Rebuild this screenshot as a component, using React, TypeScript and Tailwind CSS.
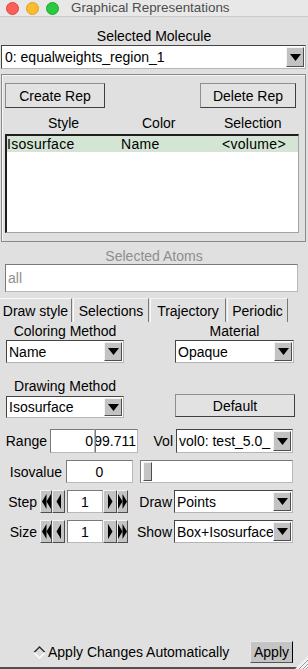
import React from 'react';

const raised =
  'border border-t-[#f4f4f4] border-l-[#f4f4f4] border-b-[#4e4e4e] border-r-[#4e4e4e]';

const DownArrow = () => (
  <svg width="11" height="7" viewBox="0 0 11 7">
    <path d="M0 0H11L5.5 7Z" fill="#000" />
  </svg>
);

const Dropdown: React.FC<{ text: string; className: string; pad?: string }> = ({ text, className, pad = 'pl-[2px]' }) => (
  <div
    className={`flex items-stretch bg-white border border-t-[#444] border-l-[#444] border-b-[#b5b5b5] border-r-[#b5b5b5] overflow-hidden ${className}`}
  >
    <div className={`flex-1 min-w-0 flex items-center overflow-hidden whitespace-nowrap leading-[16px] ${pad}`}>
      {text}
    </div>
    <div className={`w-[18px] shrink-0 my-[1px] mr-[1px] bg-[#c2c2c2] flex items-center justify-center ${raised}`}>
      <DownArrow />
    </div>
  </div>
);

const Entry: React.FC<{ className: string; children?: React.ReactNode }> = ({ className, children }) => (
  <div
    className={`bg-white border border-t-[#7a7a7a] border-l-[#7a7a7a] border-b-[#b9b9b9] border-r-[#b9b9b9] flex items-center overflow-hidden whitespace-nowrap leading-[16px] ${className}`}
  >
    {children}
  </div>
);

const Button: React.FC<{ label: string; className: string }> = ({ label, className }) => (
  <div
    className={`flex items-center justify-center bg-[#e2e2e2] border border-t-[#8e8e8e] border-l-[#8e8e8e] border-b-[#3f3f3f] border-r-[#3f3f3f] leading-[16px] ${className}`}
  >
    {label}
  </div>
);

const ArrowBtn: React.FC<{ dir: 'l' | 'r'; double?: boolean; className: string }> = ({ dir, double, className }) => (
  <div className={`h-full bg-[#c4c4c4] flex items-center justify-center ${raised} ${className}`}>
    <svg width={double ? 9 : 5} height="15" viewBox={double ? '0 0 9 15' : '0 0 5 15'}>
      {dir === 'l' ? (
        double ? (
          <>
            <path d="M4.5 0V15L0 7.5Z" fill="#000" />
            <path d="M9 0V15L4.5 7.5Z" fill="#000" />
          </>
        ) : (
          <path d="M5 0V15L0.5 7.5Z" fill="#000" />
        )
      ) : double ? (
        <>
          <path d="M0 0V15L4.5 7.5Z" fill="#000" />
          <path d="M4.5 0V15L9 7.5Z" fill="#000" />
        </>
      ) : (
        <path d="M0 0V15L4.5 7.5Z" fill="#000" />
      )}
    </svg>
  </div>
);

const Spinner: React.FC<{ label: string; side: string; choice: string }> = ({ label, side, choice }) => (
  <div className="mt-[7px] h-[23px] flex items-center">
    <div className="w-[37px] text-right leading-[16px]">{label}</div>
    <ArrowBtn dir="l" double className="ml-[3px] w-[12px]" />
    <ArrowBtn dir="l" className="w-[13px]" />
    <Entry className="ml-[2px] w-[36px] h-full justify-center">1</Entry>
    <ArrowBtn dir="r" className="w-[14px]" />
    <ArrowBtn dir="r" double className="w-[11px]" />
    <div className="w-[44px] text-right leading-[16px]">{side}</div>
    <Dropdown text={choice} className="ml-[2px] w-[119px] h-full" />
  </div>
);

export default function App() {
  return (
    <div className="relative w-[308px] h-[669px] bg-[#e0e0e0] flex flex-col overflow-hidden text-[14px] text-black font-['Liberation_Sans',Arial,sans-serif]">
      {/* title bar */}
      <div className="h-[17px] shrink-0 flex items-center bg-[#e8e8e8] border-b border-[#cacaca]">
        <div className="ml-[6px] flex gap-[7px]">
          <div className="w-[13px] h-[13px] rounded-full bg-[#fc5f57] border border-[#e0443e]" />
          <div className="w-[13px] h-[13px] rounded-full bg-[#fdbc2e] border border-[#dea123]" />
          <div className="w-[13px] h-[13px] rounded-full bg-[#29c940] border border-[#1aab29]" />
        </div>
        <div className="ml-[12px] text-[13.4px] leading-[16px] text-[#4d4d4d]">Graphical Representations</div>
      </div>

      <div className="mt-[11px] h-[16px] leading-[16px] text-center">Selected Molecule</div>
      <Dropdown text="0: equalweights_region_1" className="mt-[1px] ml-[1px] w-[305px] h-[24px]" pad="pl-[3px]" />

      {/* reps frame */}
      <div className="mt-[5px] ml-[1px] w-[305px] h-[168px] shrink-0 border border-[#8a8a8a] shadow-[inset_1px_1px_0_#f6f6f6] flex flex-col">
        <div className="mt-[8px] h-[25px] flex">
          <Button label="Create Rep" className="ml-[3px] w-[100px]" />
          <Button label="Delete Rep" className="ml-auto mr-[9px] w-[96px]" />
        </div>
        <div className="mt-[7px] h-[16px] leading-[16px] flex">
          <div className="w-[46px]" />
          <div className="w-[94px]">Style</div>
          <div className="w-[82px]">Color</div>
          <div>Selection</div>
        </div>
        <div className="mt-[3px] ml-[3px] w-[294px] h-[99px] bg-white border-t-2 border-l-2 border-t-[#1e1e1e] border-l-[#1e1e1e] border-r border-b border-r-[#a3a3a3] border-b-[#a3a3a3]">
          <div className="h-[16px] leading-[16px] bg-[#d5e5d5] flex tracking-[0.3px]">
            <div className="w-[114px]">Isosurface</div>
            <div className="w-[101px]">Name</div>
            <div>&lt;volume&gt;</div>
          </div>
        </div>
      </div>

      <div className="mt-[6px] h-[16px] leading-[16px] text-center text-[#8e8e8e]">Selected Atoms</div>
      <Entry className="ml-[5px] w-[293px] h-[28px] pl-[2px] text-[#8e8e8e]">all</Entry>

      {/* tabs */}
      <div className="mt-[6px] h-[24px] flex leading-[16px]">
        <div className="w-[72px] flex items-center justify-center border-t border-r border-t-[#fafafa] border-r-[#777]">Draw style</div>
        <div className="ml-[1px] w-[76px] flex items-center justify-center border-t border-l border-r border-t-[#f2f2f2] border-l-[#fafafa] border-r-[#777]">Selections</div>
        <div className="ml-[1px] w-[76px] flex items-center justify-center border-t border-l border-r border-t-[#f2f2f2] border-l-[#fafafa] border-r-[#777]">Trajectory</div>
        <div className="ml-[1px] w-[61px] flex items-center justify-center border-t border-l border-r border-t-[#f2f2f2] border-l-[#fafafa] border-r-[#777]">Periodic</div>
      </div>

      {/* coloring / material */}
      <div className="mt-[1px] flex">
        <div className="ml-[6px] w-[118px] flex flex-col">
          <div className="h-[16px] leading-[16px] text-center">Coloring Method</div>
          <Dropdown text="Name" className="mt-[1px] h-[23px]" />
        </div>
        <div className="ml-[51px] w-[119px] flex flex-col">
          <div className="h-[16px] leading-[16px] text-center">Material</div>
          <Dropdown text="Opaque" className="mt-[1px] h-[23px]" />
        </div>
      </div>

      <div className="mt-[15px] flex">
        <div className="ml-[6px] w-[118px] flex flex-col">
          <div className="h-[16px] leading-[16px] text-center">Drawing Method</div>
          <Dropdown text="Isosurface" className="mt-[2px] h-[22px]" />
        </div>
        <div className="ml-[51px] w-[120px] flex flex-col">
          <Button label="Default" className="mt-[16px] h-[23px]" />
        </div>
      </div>

      {/* range */}
      <div className="mt-[11px] h-[24px] flex items-center">
        <div className="w-[47px] text-right leading-[16px]">Range</div>
        <Entry className="ml-[3px] w-[45px] h-full justify-end pr-[1px]">0</Entry>
        <Entry className="w-[43px] h-full justify-end pr-[1px]">
          <span className="shrink-0">99.711</span>
        </Entry>
        <div className="w-[35px] text-right leading-[16px]">Vol</div>
        <Dropdown text="vol0: test_5.0_" className="ml-[3px] w-[117px] h-full" />
      </div>

      {/* isovalue */}
      <div className="mt-[7px] h-[23px] flex items-center">
        <div className="w-[62px] text-right leading-[16px]">Isovalue</div>
        <Entry className="ml-[4px] w-[67px] h-full justify-center">0</Entry>
        <div className="ml-[7px] w-[153px] h-full bg-white border border-t-[#7a7a7a] border-l-[#7a7a7a] border-b-[#b9b9b9] border-r-[#b9b9b9] flex">
          <div className={`ml-[2px] my-[1px] w-[9px] bg-[#c4c4c4] ${raised}`} />
        </div>
      </div>

      <Spinner label="Step" side="Draw" choice="Points" />
      <Spinner label="Size" side="Show" choice="Box+Isosurface" />

      <div className="flex-1" />

      {/* bottom */}
      <div className="h-[22px] mb-[4px] flex items-center">
        <svg className="ml-[33px]" width="13" height="13" viewBox="0 0 13 13">
          <path d="M6.5 1L12 6.5L6.5 12L1 6.5Z" fill="#dcdcdc" />
          <path d="M1 6.5L6.5 1L12 6.5" fill="none" stroke="#2a2a2a" strokeWidth="1.3" />
          <path d="M1 6.5L6.5 12L12 6.5" fill="none" stroke="#ffffff" strokeWidth="1.3" />
        </svg>
        <div className="ml-[2px] leading-[16px]">Apply Changes Automatically</div>
        <div className="ml-auto mr-[15px] w-[43px] h-full flex items-center justify-center bg-[#c4c4c4] border border-t-[#e6e6e6] border-l-[#e6e6e6] border-r-black border-b-[#555] leading-[16px]">
          Apply
        </div>
      </div>
      <div className="h-[2px] shrink-0 bg-[#505050]" />

      {/* resize grip */}
      <svg className="absolute right-0 bottom-0" width="13" height="13" viewBox="0 0 13 13">
        <path d="M13 0V13H0Z" fill="#f2f2f2" />
        <path d="M4 13L13 4M8 13L13 8M11 13L13 11" stroke="#9a9a9a" strokeWidth="1" />
      </svg>
    </div>
  );
}
